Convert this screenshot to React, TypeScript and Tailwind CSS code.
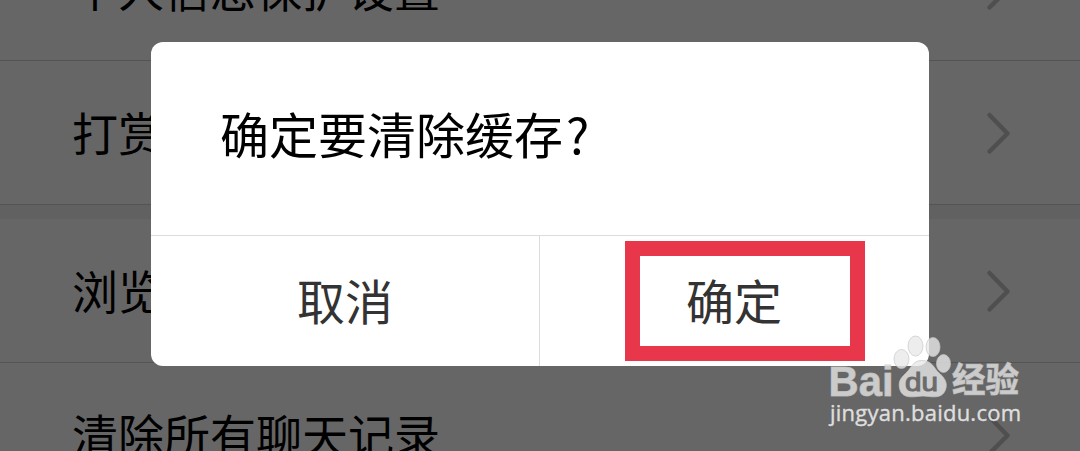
import React from "react";

interface SettingItem {
  id: string;
  title: string;
}

const PRIVACY_ITEMS: SettingItem[] = [
  { id: "privacy", title: "个人信息保护设置" },
  { id: "reward", title: "打赏" },
];

const HISTORY_ITEMS: SettingItem[] = [
  { id: "browse", title: "浏览" },
  { id: "chat", title: "清除所有聊天记录" },
];

function Chevron() {
  return (
    <svg width="26" height="44" viewBox="0 0 26 44" fill="none">
      <path
        d="M4.5 4 L22.5 22.5 L4.5 40.5"
        stroke="#c6c6c6"
        strokeWidth="4.5"
        strokeLinecap="round"
        strokeLinejoin="round"
      />
    </svg>
  );
}

function SettingRow({ item }: { item: SettingItem }) {
  return (
    <div className="flex h-36 shrink-0 items-center justify-between border-b border-[#d2d2d2] pl-[72px] pr-[69px]">
      <span className="whitespace-nowrap pb-[3px] text-[46px] leading-none text-black">
        {item.title}
      </span>
      <Chevron />
    </div>
  );
}

function ConfirmDialog() {
  return (
    <div
      role="dialog"
      className="flex h-[324px] w-[778px] flex-col overflow-hidden rounded-[12px] bg-white"
    >
      <div className="flex h-[194px] items-center border-b border-[#dcdcdc] pb-[13px] pl-[69px]">
        <p className="whitespace-nowrap text-[49px] leading-none text-black">
          确定要清除缓存<span className="ml-[3px] inline-block">?</span>
        </p>
      </div>
      <div className="flex flex-1 text-[48px] leading-none text-[#333]">
        <button className="w-[389px] border-r border-[#dcdcdc] pb-[5px]">
          取消
        </button>
        <div className="flex flex-1 pl-[85px] pt-[5px]">
          <button className="h-[120px] w-[240px] border-[15px] border-[#e8364a] pb-[5px] pr-[22px]">
            确定
          </button>
        </div>
      </div>
    </div>
  );
}

function Watermark() {
  return (
    <svg
      className="absolute left-[820px] top-[330px]"
      width="210"
      height="110"
      viewBox="820 330 210 110"
    >
      <g fill="#e8e8e8" fillOpacity="0.8" stroke="#c8c8c8" strokeOpacity="0.7">
        <text
          x="828.5"
          y="395.5"
          fontSize="43"
          fontWeight="700"
          fontFamily="Liberation Sans, sans-serif"
          textLength="65"
          lengthAdjust="spacingAndGlyphs"
        >
          Bai
        </text>
        <ellipse cx="901.5" cy="359" rx="7.5" ry="9.5" />
        <ellipse cx="915.5" cy="346" rx="7.5" ry="10" />
        <ellipse cx="933" cy="347" rx="7" ry="9.5" />
        <ellipse cx="943.5" cy="363.5" rx="7" ry="9" />
        <path d="M922 360.5 C932 360.5 934 368 938 372 C944 377 947.5 382 946 388 C943 400 932 396.5 923 396 C914 396.5 902 400 899.5 388 C898 380 902 377 907 372 C912 367 913 360.5 922 360.5 Z" />
        <text
          x="952"
          y="392"
          fontSize="34"
          fontWeight="700"
          fontFamily="Noto Sans CJK SC, sans-serif"
          textLength="67"
          lengthAdjust="spacingAndGlyphs"
        >
          经验
        </text>
      </g>
      <text
        x="905"
        y="390.5"
        fontSize="26"
        fill="#6b6b6b"
        stroke="#6b6b6b"
        strokeWidth="1"
        fontFamily="Liberation Sans, sans-serif"
        textLength="33"
        lengthAdjust="spacingAndGlyphs"
      >
        du
      </text>
      <text
        x="830"
        y="421"
        fontSize="22"
        fill="#dedede"
        stroke="#dedede"
        strokeWidth="0.4"
        fontFamily="Open Sans, sans-serif"
        textLength="191"
      >
        jingyan.baidu.com
      </text>
    </svg>
  );
}

export default function App() {
  return (
    <div className="relative h-[451px] w-[1080px] overflow-hidden bg-white font-['Noto_Sans_CJK_SC',sans-serif]">
      {/* list is scrolled so that its first row is cut off at the top */}
      <div className="-mt-[83px] flex flex-col">
        {PRIVACY_ITEMS.map((item) => (
          <SettingRow key={item.id} item={item} />
        ))}
        <div className="h-3.5 shrink-0 bg-[#f3f3f3]" />
        {HISTORY_ITEMS.map((item) => (
          <SettingRow key={item.id} item={item} />
        ))}
      </div>

      <div className="absolute inset-0 bg-black/60 pl-[151px] pt-[42px]">
        <ConfirmDialog />
      </div>

      <Watermark />
    </div>
  );
}
